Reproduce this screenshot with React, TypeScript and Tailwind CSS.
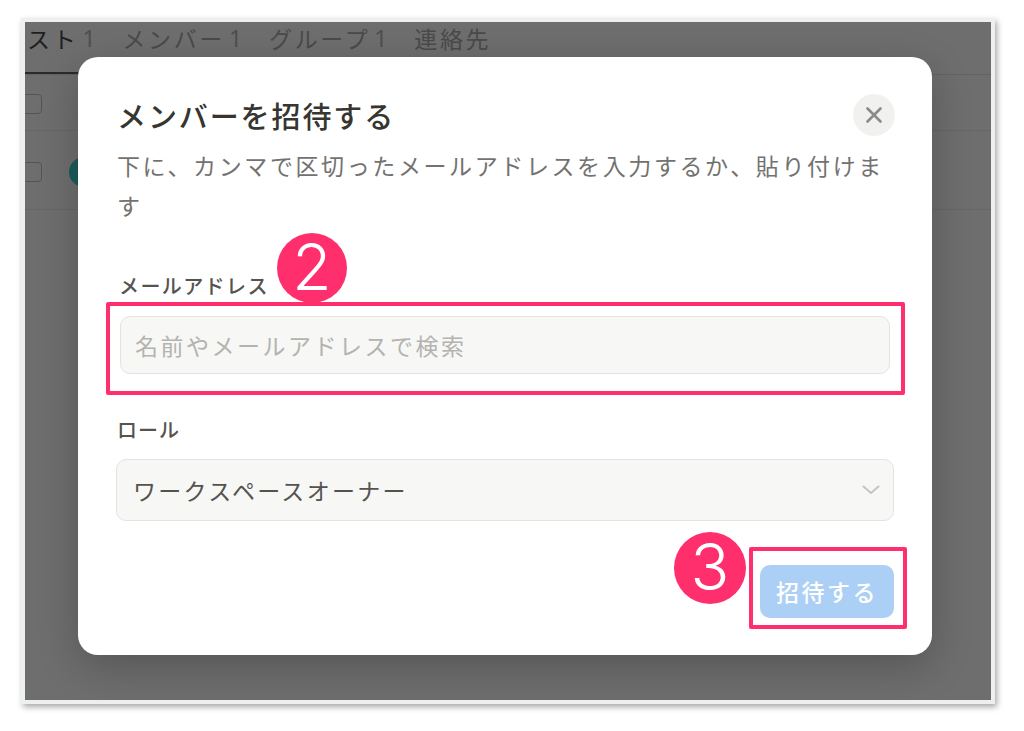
import React from 'react';

const jp = "font-['Noto_Sans_CJK_JP','Noto_Sans',sans-serif]";

const tabs = [
    { name: 'スト', count: '1', active: true },
    { name: 'メンバー', count: '1', active: false },
    { name: 'グループ', count: '1', active: false },
    { name: '連絡先', count: '', active: false },
];

const Badge: React.FC<{ n: string; className: string }> = ({ n, className }) => (
    <div className={`absolute flex items-center justify-center rounded-full bg-[#ff2f6e] text-white font-['Inter',sans-serif] font-light leading-none ${className}`}>
        {n}
    </div>
);

const App: React.FC = () => {
    return (
        <div className={`w-[1024px] h-[731px] bg-white pt-[18px] pl-[21px] ${jp}`}>
            {/* Screenshot frame */}
            <div className="w-[974px] h-[686px] border-4 border-[#eef0ef] shadow-[2px_3px_6px_rgba(0,0,0,0.35)]">
                <div className="relative w-full h-full bg-[#6e6e6e] overflow-hidden">
                    {/* Background page (dimmed) */}
                    <div className="flex h-[53px] items-start gap-[24px] border-b border-[#636363] pl-[2px]">
                        {tabs.map((t) => (
                            <div
                                key={t.name}
                                className={`flex h-[52px] items-start gap-[4px] text-[23px] leading-[32px] tracking-[2.7px] ${t.active ? 'relative text-[#1f1f1f]' : 'text-[#4a4a4a]'}`}
                            >
                                <span className="whitespace-nowrap">{t.name}</span>
                                {t.count && <span className="font-['Noto_Sans',sans-serif] text-[#4f4f4f]">{t.count}</span>}
                                {t.active && <div className="absolute -left-[2px] bottom-0 h-[2px] w-[90px] bg-[#2b2b2b]" />}
                            </div>
                        ))}
                    </div>
                    <div className="flex h-[56px] items-center border-b border-[#666666]">
                        <div className="-ml-[3px] mt-[3px] h-[20px] w-[20px] rounded-[4px] border-[1.5px] border-[#555555]" />
                    </div>
                    <div className="flex h-[79px] items-center gap-[27px] border-b border-[#666666]">
                        <div className="-ml-[3px] mt-[3px] h-[20px] w-[20px] rounded-[4px] border-[1.5px] border-[#555555]" />
                        <div className="mt-[3px] h-[30px] w-[30px] rounded-full bg-[#1d5a5c]" />
                    </div>

                    {/* Modal */}
                    <div className="absolute left-[53px] top-[35px] w-[854px] h-[598px] rounded-[20px] bg-white pt-[37px] pl-[39px] pr-[37px] shadow-[0_12px_40px_rgba(0,0,0,0.22)]">
                        <div className="flex h-[42px] items-center justify-between">
                            <h2 className="text-[29px] leading-[40px] tracking-[1.9px] font-medium text-[#37352f]">メンバーを招待する</h2>
                            <button className="flex h-[42px] w-[42px] items-center justify-center rounded-full bg-[#f1f1ef]">
                                <svg width="18" height="18" viewBox="0 0 18 18" fill="none" stroke="#8a8a88" strokeWidth="2.6" strokeLinecap="round">
                                    <path d="M2.5 2.5 L15.5 15.5 M15.5 2.5 L2.5 15.5" />
                                </svg>
                            </button>
                        </div>
                        <p className="mt-[9px] text-[23px] leading-[40px] tracking-[2.6px] text-[#737270]">
                            下に、カンマで区切ったメールアドレスを入力するか、貼り付けます
                        </p>

                        <div className="mt-[46px] pl-[2px] text-[20px] leading-[30px] tracking-[1.4px] font-medium text-[#55534f]">メールアドレス</div>
                        <div className="mt-[15px] ml-[3px] flex h-[58px] w-[770px] items-center rounded-[10px] border-[1.5px] border-[#e3e3e1] bg-[#f7f7f5] pl-[14px] text-[23px] tracking-[2.5px] text-[#b3b3b0]">
                            名前やメールアドレスで検索
                        </div>

                        <div className="mt-[41px] text-[20px] leading-[30px] tracking-[1px] font-medium text-[#55534f]">ロール</div>
                        <div className="mt-[14px] -ml-[1px] flex h-[62px] w-[778px] items-center justify-between rounded-[10px] border-[1.5px] border-[#e3e3e1] bg-[#f7f7f5] pl-[16px] pr-[13px] text-[23px] tracking-[2.3px] text-[#55534f]">
                            <span>ワークスペースオーナー</span>
                            <svg width="18" height="10" viewBox="0 0 18 10" fill="none" stroke="#c4c4c2" strokeWidth="2" strokeLinecap="round" strokeLinejoin="round">
                                <path d="M1.5 1.5 L9 8 L16.5 1.5" />
                            </svg>
                        </div>

                        <div className="mt-[44px] flex justify-end pr-[1px]">
                            <button className="flex h-[53px] w-[134px] items-center justify-center rounded-[10px] bg-[#acd0f5] text-[23px] tracking-[2.5px] font-medium text-white">
                                招待する
                            </button>
                        </div>

                        {/* Annotations */}
                        <div className="absolute left-[28px] top-[245px] h-[93px] w-[799px] rounded-[2px] border-4 border-[#ff2f6e]" />
                        <Badge n="2" className="left-[199px] top-[176px] h-[70px] w-[70px] text-[64px] pb-[2px]" />
                        <div className="absolute left-[671px] top-[490px] h-[82px] w-[158px] rounded-[2px] border-4 border-[#ff2f6e]" />
                        <Badge n="3" className="left-[596px] top-[475px] h-[72px] w-[72px] text-[64px] pb-[2px]" />
                    </div>
                </div>
            </div>
        </div>
    );
};

export default App;
